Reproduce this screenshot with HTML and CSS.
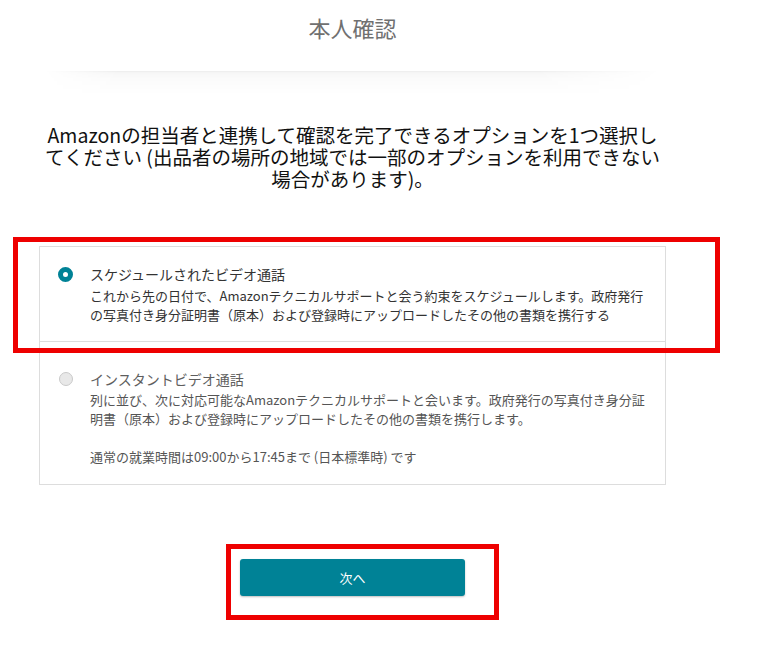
FILE: index.html
```html
<!DOCTYPE html>
<html lang="ja">
<head>
  <meta charset="UTF-8">
  <meta name="viewport" content="width=device-width, initial-scale=1.0">
  <title>本人確認</title>
  <link rel="stylesheet" href="styles.css">
</head>
<body>
  <div class="page">

    <!-- Kopfzeile -->
    <header class="page-header">
      <h1>本人確認</h1>
    </header>
    <div class="header-shade"></div>

    <p class="intro">
      <span class="intro-line">Amazonの担当者と連携して確認を完了できるオプションを1つ選択し</span>
      <span class="intro-line">てください (出品者の場所の地域では一部のオプションを利用できない</span>
      <span class="intro-line">場合があります)。</span>
    </p>

    <!-- Optionen -->
    <div class="options">
      <div class="marked marked-option">
        <div class="option selected">
          <span class="radio radio-on"></span>
          <div class="option-body">
            <div class="option-title">スケジュールされたビデオ通話</div>
            <p class="option-text">
              これから先の日付で、Amazonテクニカルサポートと会う約束をスケジュールします。政府発行<br>
              の写真付き身分証明書（原本）および登録時にアップロードしたその他の書類を携行する
            </p>
          </div>
        </div>
      </div>

      <div class="option disabled">
        <span class="radio radio-off"></span>
        <div class="option-body">
          <div class="option-title">インスタントビデオ通話</div>
          <p class="option-text">
            列に並び、次に対応可能なAmazonテクニカルサポートと会います。政府発行の写真付き身分証<br>
            明書（原本）および登録時にアップロードしたその他の書類を携行します。
          </p>
          <p class="option-text hours">通常の就業時間は09:00から17:45まで (日本標準時) です</p>
        </div>
      </div>
    </div>

    <div class="actions">
      <div class="marked marked-button">
        <button class="next-btn">次へ</button>
      </div>
    </div>

  </div>
</body>
</html>
```

FILE: styles.css
```css
body {
  font-family: 'Noto Sans CJK JP', 'Noto Sans', sans-serif;
  background-color: #ffffff;
  color: #111111;
  margin: 0;
  padding: 0;
}

.page {
  width: 705px;
  padding-bottom: 62px;
}

.page-header {
  height: 71px;
  text-align: center;
}

.page-header h1 {
  margin: 0;
  padding-top: 14px;
  font-size: 22px;
  line-height: 26px;
  font-weight: 400;
  color: #707070;
}

.header-shade {
  height: 24px;
  margin: 0 45px;
  background: linear-gradient(to bottom, rgba(0, 0, 0, 0.07) 0, rgba(0, 0, 0, 0.03) 2px, rgba(0, 0, 0, 0.015) 8px, rgba(0, 0, 0, 0) 24px);
  -webkit-mask-image: linear-gradient(to right, transparent 0, #000 12%, #000 80%, transparent 100%);
  mask-image: linear-gradient(to right, transparent 0, #000 12%, #000 80%, transparent 100%);
}

.intro {
  margin: 29px 0 0;
  font-size: 19.5px;
  text-align: center;
  color: #111111;
}

.intro-line {
  display: block;
  height: 22px;
  line-height: 22px;
  white-space: nowrap;
}

.options {
  margin: 56px 39px 0;
}

.option {
  display: flex;
  align-items: flex-start;
  gap: 17px;
  border: 1px solid #dddddd;
  background-color: #ffffff;
  padding: 17px 18px 17px 18px;
}

.option.disabled {
  margin-top: -1px;
  padding-top: 27px;
  padding-bottom: 18px;
}

.radio {
  flex: none;
  box-sizing: border-box;
  width: 15px;
  height: 15px;
  border-radius: 50%;
  margin-top: 3px;
}

.radio-on {
  border: 5px solid #008296;
  background-color: #ffffff;
}

.radio-off {
  width: 14px;
  height: 14px;
  margin-left: 1px;
  border: 1px solid #c9c9c9;
  background-color: #e8e8e8;
}

.option-title {
  font-size: 14px;
  line-height: 20px;
  color: #333333;
}

.option-text {
  margin: 2px 0 0;
  font-size: 13px;
  line-height: 19px;
  color: #333333;
}

.disabled .option-title {
  color: #5e5e5e;
}

.disabled .option-text {
  margin-top: 1px;
  color: #555555;
}

.disabled .hours {
  margin-top: 19px;
}

.actions {
  display: flex;
  justify-content: center;
  margin-top: 74px;
}

.next-btn {
  display: block;
  width: 225px;
  height: 37px;
  border: none;
  border-radius: 3px;
  background-color: #008296;
  color: #ffffff;
  font-family: inherit;
  font-size: 13px;
  cursor: pointer;
  box-shadow: 0 1px 2px rgba(0, 0, 0, 0.25);
}

/* rote Markierungen */
.marked {
  position: relative;
}

.marked::after {
  content: "";
  position: absolute;
  border: 5px solid #ee0000;
  pointer-events: none;
  z-index: 2;
}

.marked-option::after {
  left: -26px;
  right: -54px;
  top: -9px;
  bottom: -11px;
}

.marked-button::after {
  left: -14px;
  right: -34px;
  top: -15px;
  bottom: -24px;
}
```
